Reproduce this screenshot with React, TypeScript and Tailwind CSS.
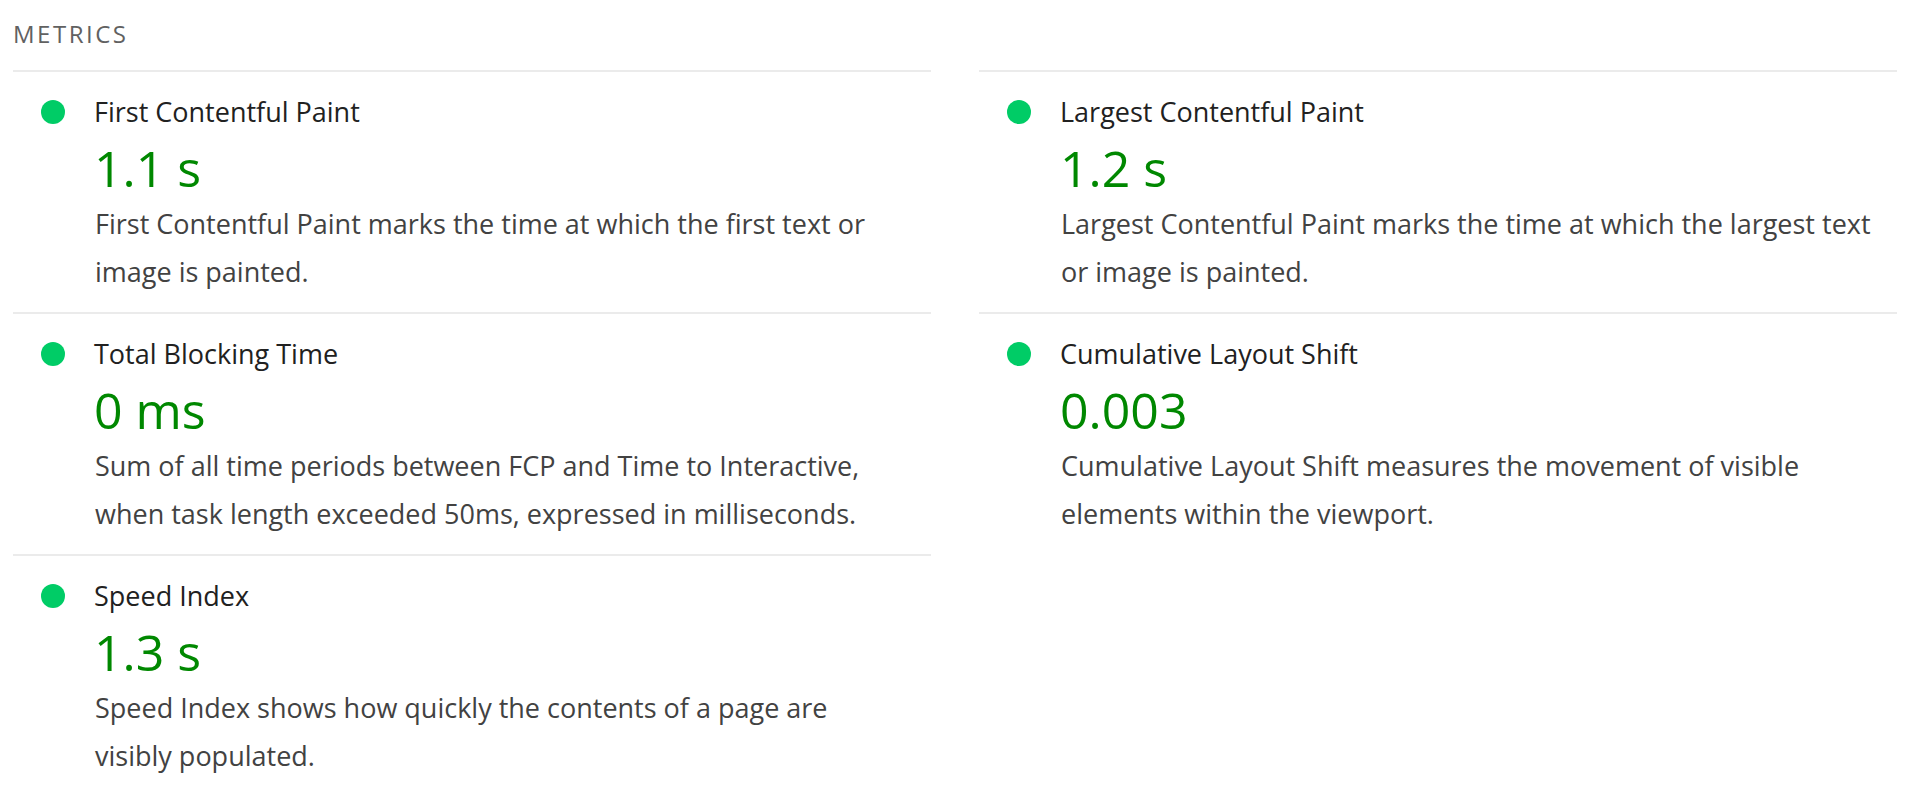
const metrics = [
  {
    title: "First Contentful Paint",
    value: "1.1 s",
    lines: ["First Contentful Paint marks the time at which the first text or", "image is painted."],
  },
  {
    title: "Largest Contentful Paint",
    value: "1.2 s",
    lines: ["Largest Contentful Paint marks the time at which the largest text", "or image is painted."],
  },
  {
    title: "Total Blocking Time",
    value: "0 ms",
    lines: [
      "Sum of all time periods between FCP and Time to Interactive,",
      "when task length exceeded 50ms, expressed in milliseconds.",
    ],
  },
  {
    title: "Cumulative Layout Shift",
    value: "0.003",
    lines: ["Cumulative Layout Shift measures the movement of visible", "elements within the viewport."],
  },
  {
    title: "Speed Index",
    value: "1.3 s",
    lines: ["Speed Index shows how quickly the contents of a page are", "visibly populated."],
  },
];

const Metric = ({ title, value, lines }: { title: string; value: string; lines: string[] }) => {
  return (
    <div className="border-t-2 border-[#ebebeb] py-4">
      <div className="flex items-center h-12">
        <span className="ml-[28px] w-6 h-6 rounded-full bg-[#00cc66]" />
        <span className="ml-[29px] text-[27px] leading-[48px] text-[#212121] whitespace-nowrap">{title}</span>
      </div>
      <div className="pl-[81px] text-[50px] leading-[64px] text-[#008800]">{value}</div>
      <div className="pl-[82px] text-[27px] leading-[48px] text-[#424242]">
        {lines.map((l) => (
          <div key={l} className="whitespace-nowrap">
            {l}
          </div>
        ))}
      </div>
    </div>
  );
};

export default function App() {
  return (
    <div className="w-[1905px] h-[790px] overflow-hidden bg-white pl-[13px] font-['Open_Sans',sans-serif]">
      <div className="h-[70px] pt-[17px] text-[24px] leading-[34px] tracking-[2.5px] text-[#616161]">METRICS</div>
      <div className="grid grid-cols-[918px_918px] gap-x-[48px]">
        {metrics.map((m) => (
          <Metric key={m.title} {...m} />
        ))}
      </div>
    </div>
  );
}
